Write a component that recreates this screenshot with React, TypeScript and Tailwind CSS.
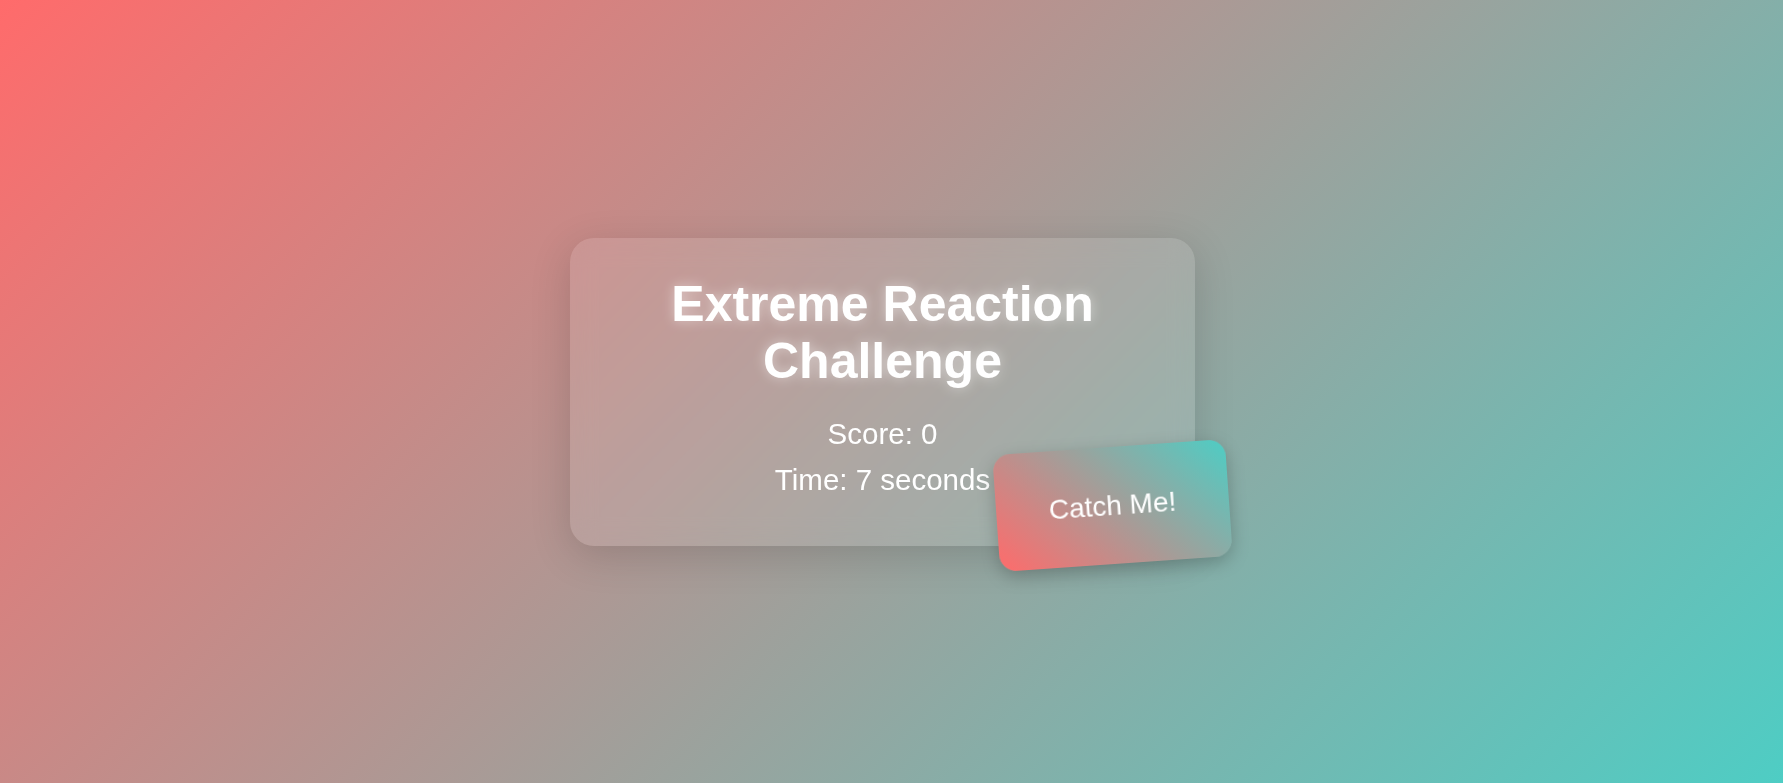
import React from "react";

export default function App() {
  return (
    <div className="relative flex h-screen w-full items-center justify-center overflow-hidden bg-[linear-gradient(135deg,#ff6b6b,#4ecdc4)] pr-[18px] font-['Liberation_Sans',Arial,sans-serif] text-white">
      <div className="w-[625px] rounded-[24px] bg-white/10 px-10 pt-[38px] pb-[49px] text-center shadow-[0_10px_40px_rgba(0,0,0,0.15)] backdrop-blur-md">
        <h1 className="text-[50px] font-bold leading-[1.15] [text-shadow:0_0_12px_rgba(255,255,255,0.5)]">
          Extreme Reaction Challenge
        </h1>
        <p className="mt-[26px] text-[29.5px] leading-[34px]">Score: 0</p>
        <p className="mt-[12px] text-[29.5px] leading-[34px]">Time: 7 seconds</p>
      </div>
      <button className="absolute left-[996px] top-[447px] flex h-[117px] w-[233px] rotate-[-4deg] items-center justify-center rounded-[17px] bg-[linear-gradient(45deg,#ff6b6b,#4ecdc4)] text-[28px] text-white shadow-[0_6px_18px_rgba(0,0,0,0.22)]">
        Catch Me!
      </button>
    </div>
  );
}
